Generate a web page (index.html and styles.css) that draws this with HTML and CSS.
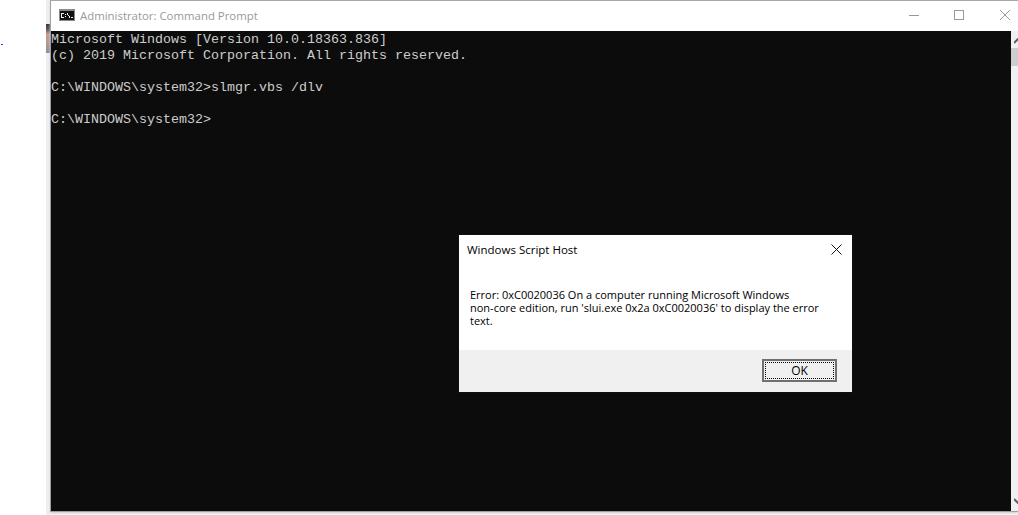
FILE: index.html
```html
<!DOCTYPE html>
<html lang="en">
<head>
    <meta charset="utf-8">
    <title>Command Prompt</title>
    <link rel="stylesheet" href="styles.css">
</head>
<body>
    <span class="stray-dot"></span>

    <div class="backdrop">
        <div class="backdrop-photo"></div>
    </div>

    <div class="window">
        <header class="titlebar">
            <svg class="app-icon" width="16" height="16" viewBox="0 0 16 16">
                <rect x="0" y="2" width="16" height="12" fill="#8a8a8a"/>
                <rect x="1" y="4" width="14" height="9" fill="#111"/>
                <path d="M2 6h3v1H3v3h2v1H2zM6 7h1v1H6zM6 9h1v1H6zM8 6h1v2h1v1h1v2h-1V9H9V8H8zM12 10h2v1h-2z" fill="#eee"/>
            </svg>
            <span class="window-title">Administrator: Command Prompt</span>
            <div class="window-controls">
                <svg class="control-min" width="10" height="10" viewBox="0 0 10 10"><path d="M0 5.500h10" stroke="#999" fill="none"/></svg>
                <svg width="10" height="10" viewBox="0 0 10 10"><rect x=".5" y=".5" width="9" height="9" stroke="#999" fill="none"/></svg>
                <svg width="10" height="10" viewBox="0 0 10 10"><path d="M0 0l10 10M10 0L0 10" stroke="#999" fill="none"/></svg>
            </div>
        </header>

        <div class="window-body">
            <pre class="console">Microsoft Windows [Version 10.0.18363.836]
(c) 2019 Microsoft Corporation. All rights reserved.

C:\WINDOWS\system32&gt;slmgr.vbs /dlv

C:\WINDOWS\system32&gt;</pre>
            <div class="scrollbar">
                <svg class="arrow arrow-up" width="9" height="6" viewBox="0 0 9 6"><path d="M0 5l4.500-4.500L9 5" stroke="#606060" stroke-width="2" fill="none"/></svg>
                <div class="thumb"></div>
                <svg class="arrow arrow-down" width="9" height="6" viewBox="0 0 9 6"><path d="M0 1l4.500 4.500L9 1" stroke="#606060" stroke-width="2" fill="none"/></svg>
            </div>

            <div class="dialog">
                <div class="dialog-head">
                    <span>Windows Script Host</span>
                    <svg width="11" height="11" viewBox="0 0 11 11"><path d="M.5.500l10 10M10.500.500l-10 10" stroke="#111" fill="none"/></svg>
                </div>
                <p class="dialog-message">Error: 0xC0020036 On a computer running Microsoft Windows<br>non-core edition, run 'slui.exe 0x2a 0xC0020036' to display the error<br>text.</p>
                <div class="dialog-foot">
                    <button class="ok-button"><span>OK</span></button>
                </div>
            </div>
        </div>
    </div>
</body>
</html>
```

FILE: styles.css
```css
* {
    margin: 0;
    padding: 0;
    box-sizing: border-box;
}

html, body {
    height: 515px;
    overflow: hidden;
}

body {
    display: flex;
    background: #fff;
    padding-left: 46px;
    position: relative;
    font-family: 'Open Sans', 'Noto Sans', sans-serif;
}

.stray-dot {
    position: absolute;
    left: 1px;
    top: 44px;
    width: 2px;
    height: 1px;
    background: #2233cc;
}

.backdrop {
    width: 4px;
    height: 515px;
    padding-top: 24px;
    background: #eee;
}

.backdrop-photo {
    height: 29px;
    background: linear-gradient(#3a3436 0, #6b5a58 20%, #c79c88 35%, #b89a90 60%, #8c8f9a 100%);
}

.window {
    flex: 1;
    height: 512px;
    display: flex;
    flex-direction: column;
    border-top: 1px solid #a8a8a8;
    border-left: 1px solid #a0a0a0;
    border-bottom: 1px solid #a0a0a0;
    box-shadow: 0 2px 2px #d8d8d8;
}

.titlebar {
    height: 30px;
    flex: none;
    display: flex;
    align-items: center;
    padding: 0 8px 2px 8px;
    background: #fff;
}

.app-icon {
    margin-right: 5px;
}

.window-title {
    font-size: 11.4px;
    color: #999;
}

.window-controls {
    margin-left: auto;
    display: flex;
    gap: 36px;
}

.control-min {
    margin-right: -1px;
}

.window-body {
    flex: 1;
    display: flex;
    position: relative;
}

.console {
    flex: 1;
    padding-top: 1px;
    background: #0c0c0c;
    color: #ccc;
    font-family: 'Liberation Mono', monospace;
    font-size: 13.33px;
    line-height: 16px;
}

.scrollbar {
    width: 7px;
    background: #f0f0f0;
    display: flex;
    flex-direction: column;
    align-items: flex-end;
    overflow: hidden;
}

.arrow {
    flex: none;
    margin-right: -5px;
}

.arrow-up {
    margin-top: 7px;
}

.arrow-down {
    margin-top: auto;
    margin-bottom: 7px;
}

.thumb {
    flex: none;
    width: 100%;
    height: 18px;
    margin-top: 4px;
    background: #cdcdcd;
}

.dialog {
    position: absolute;
    left: 407px;
    top: 203px;
    width: 395px;
    height: 159px;
    background: #fff;
    border: 1px solid #101010;
    display: flex;
    flex-direction: column;
    font-size: 11px;
    color: #000;
}

.dialog-head {
    height: 29px;
    flex: none;
    display: flex;
    align-items: center;
    justify-content: space-between;
    padding: 0 10px 0 8px;
    font-size: 11.5px;
}

.dialog-message {
    flex: 1;
    padding: 24px 0 0 11px;
    line-height: 13px;
}

.dialog-foot {
    height: 42px;
    flex: none;
    background: #f0f0f0;
    display: flex;
    justify-content: flex-end;
    align-items: flex-start;
    padding: 9px 15px 0 0;
}

.ok-button {
    width: 75px;
    height: 23px;
    background: #f0f0f0;
    border: 2px solid #707070;
    padding: 1px;
    font: inherit;
    font-size: 12px;
}

.ok-button span {
    display: block;
    height: 100%;
    border: 1px dotted #000;
    line-height: 15px;
}
```
